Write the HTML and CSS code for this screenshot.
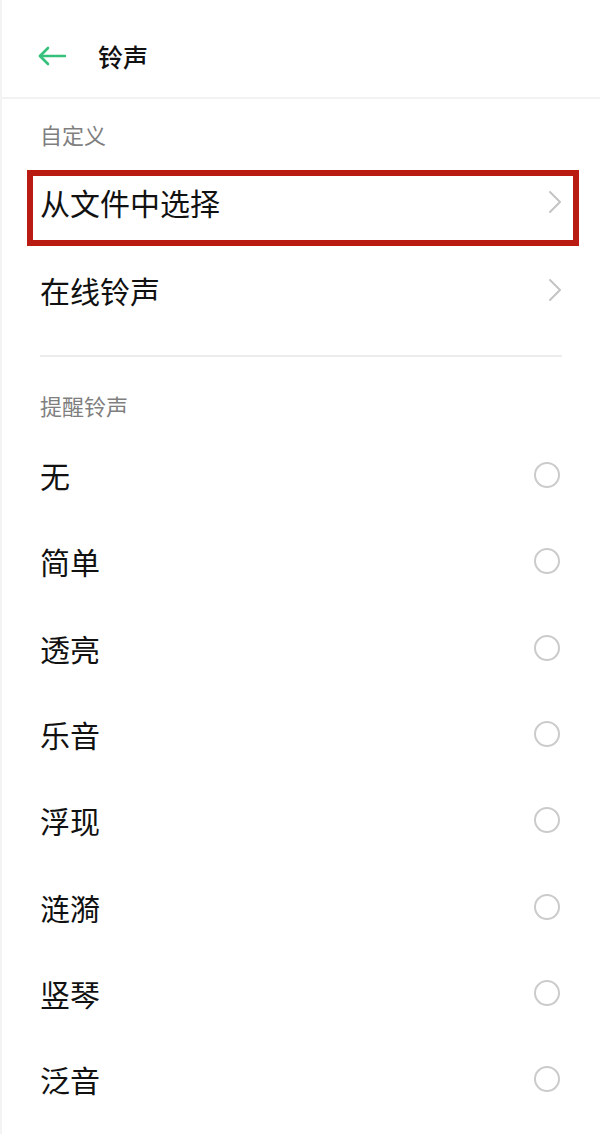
FILE: index.html
```html
<!DOCTYPE html>
<html lang="zh-CN">
<head>
<meta charset="utf-8">
<title>铃声</title>
<link rel="stylesheet" href="styles.css">
</head>
<body>
<div class="page">
  <header class="header">
    <svg class="back" width="28" height="20" viewBox="0 0 28 20">
      <line x1="2" y1="10" x2="27" y2="10" />
      <polyline points="10,2 2,10 10,18" />
    </svg>
    <h1 class="title">铃声</h1>
  </header>

  <div class="section-title first">自定义</div>

  <div class="highlight">
    <div class="row link boxed">
      <span class="label">从文件中选择</span>
      <svg class="chev" width="14" height="24" viewBox="0 0 14 24"><polyline points="2,2 12,12 2,22" /></svg>
    </div>
  </div>

  <div class="row link plain">
    <span class="label">在线铃声</span>
    <svg class="chev" width="14" height="24" viewBox="0 0 14 24"><polyline points="2,2 12,12 2,22" /></svg>
  </div>

  <div class="divider"></div>

  <div class="section-title second">提醒铃声</div>

  <ul class="list">
    <li class="item"><span class="label">无</span><span class="radio"></span></li>
    <li class="item"><span class="label">简单</span><span class="radio"></span></li>
    <li class="item"><span class="label">透亮</span><span class="radio"></span></li>
    <li class="item"><span class="label">乐音</span><span class="radio"></span></li>
    <li class="item"><span class="label">浮现</span><span class="radio"></span></li>
    <li class="item"><span class="label">涟漪</span><span class="radio"></span></li>
    <li class="item"><span class="label">竖琴</span><span class="radio"></span></li>
    <li class="item"><span class="label">泛音</span><span class="radio"></span></li>
  </ul>
</div>
</body>
</html>
```

FILE: styles.css
```css
html, body {
  margin: 0;
  padding: 0;
  background: #ffffff;
}

body {
  font-family: "Noto Sans CJK SC", "Noto Sans", sans-serif;
  color: #111111;
}

.page {
  width: 600px;
  height: 1134px;
  overflow: hidden;
  box-sizing: border-box;
  border-left: 2px solid #f3f3f3;
}

.header {
  height: 99px;
  box-sizing: border-box;
  padding: 15px 0 0 36px;
  display: flex;
  align-items: center;
  gap: 32px;
  border-bottom: 2px solid #f2f2f2;
}

.back {
  display: block;
  fill: none;
  stroke: #35c17b;
  stroke-width: 2.6;
  stroke-linecap: round;
  stroke-linejoin: round;
}

.title {
  margin: 0;
  font-size: 25px;
  font-weight: 500;
  line-height: 30px;
  color: #111111;
}

.section-title {
  font-size: 22px;
  line-height: 30px;
  color: #7f7f7f;
  padding-left: 38px;
}

.section-title.first {
  padding-top: 20px;
  margin-bottom: 21px;
}

.section-title.second {
  padding-top: 33px;
}

.highlight {
  margin: 0 21px 0 25px;
  border: 6px solid #b91b12;
  height: 64px;
}

.row {
  display: flex;
  align-items: center;
  justify-content: space-between;
  box-sizing: border-box;
}

.row.boxed {
  height: 52px;
  padding: 0 11px 0 7px;
}

.row.plain {
  height: 88px;
  padding: 0 38px 0 38px;
}

.label {
  font-size: 30px;
  line-height: 36px;
  color: #111111;
}

.chev {
  display: block;
  fill: none;
  stroke: #c4c4c4;
  stroke-width: 2;
  stroke-linecap: round;
  stroke-linejoin: round;
}

.divider {
  margin: 21px 38px 0 38px;
  height: 2px;
  background: #ececec;
}

.list {
  list-style: none;
  margin: 12px 0 0 0;
  padding: 0;
}

.item {
  height: 86.3px;
  display: flex;
  align-items: center;
  justify-content: space-between;
  padding: 0 40px 0 38px;
}

.radio {
  width: 22px;
  height: 22px;
  border: 2px solid #cbcbcb;
  border-radius: 50%;
}
```
